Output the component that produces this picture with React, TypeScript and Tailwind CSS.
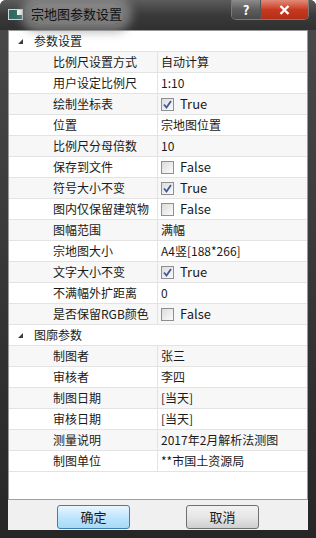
import React from "react"

type Row =
  | { kind: "cat"; label: string }
  | { kind: "text"; label: string; value: string }
  | { kind: "bool"; label: string; value: boolean }

const rows: Row[] = [
  { kind: "cat", label: "参数设置" },
  { kind: "text", label: "比例尺设置方式", value: "自动计算" },
  { kind: "text", label: "用户设定比例尺", value: "1:10" },
  { kind: "bool", label: "绘制坐标表", value: true },
  { kind: "text", label: "位置", value: "宗地图位置" },
  { kind: "text", label: "比例尺分母倍数", value: "10" },
  { kind: "bool", label: "保存到文件", value: false },
  { kind: "bool", label: "符号大小不变", value: true },
  { kind: "bool", label: "图内仅保留建筑物", value: false },
  { kind: "text", label: "图幅范围", value: "满幅" },
  { kind: "text", label: "宗地图大小", value: "A4竖[188*266]" },
  { kind: "bool", label: "文字大小不变", value: true },
  { kind: "text", label: "不满幅外扩距离", value: "0" },
  { kind: "bool", label: "是否保留RGB颜色", value: false },
  { kind: "cat", label: "图廓参数" },
  { kind: "text", label: "制图者", value: "张三" },
  { kind: "text", label: "审核者", value: "李四" },
  { kind: "text", label: "制图日期", value: "[当天]" },
  { kind: "text", label: "审核日期", value: "[当天]" },
  { kind: "text", label: "测量说明", value: "2017年2月解析法测图" },
  { kind: "text", label: "制图单位", value: "**市国土资源局" },
]

const CheckBox = ({ checked }: { checked: boolean }) => (
  <span className="w-[13px] h-[13px] border border-[#8f8f8f] bg-gradient-to-br from-[#dcdcdc] to-[#fbfbfb] flex items-center justify-center shrink-0">
    {checked && (
      <svg width="9" height="9" viewBox="0 0 9 9">
        <path d="M1 4.5 L3.5 7.5 L8 1" fill="none" stroke="#3d5a99" strokeWidth="1.8" />
      </svg>
    )}
  </span>
)

const PropRow = ({ row, index }: { row: Row; index: number }) => {
  const bg = index % 2 === 1 ? "bg-[#f7f7f7]" : "bg-white"
  if (row.kind === "cat") {
    return (
      <div className={`h-[21px] flex items-center border-b border-[#e3e3e3] ${bg}`}>
        <svg width="5" height="5" viewBox="0 0 5 5" className="ml-[9px]">
          <polygon points="5,0 5,5 0,5" fill="#3c3c3c" />
        </svg>
        <span className="ml-[11px]">{row.label}</span>
      </div>
    )
  }
  return (
    <div className={`h-[21px] flex border-b border-[#e3e3e3] ${bg}`}>
      <div className="w-[149px] shrink-0 border-r border-[#e3e3e3] pl-[44px] flex items-center whitespace-nowrap">
        {row.label}
      </div>
      <div className="flex-1 pl-[3px] flex items-center whitespace-nowrap">
        {row.kind === "bool" ? (
          <>
            <CheckBox checked={row.value} />
            <span className="ml-[6px] text-[13px]">{row.value ? "True" : "False"}</span>
          </>
        ) : (
          row.value
        )}
      </div>
    </div>
  )
}

export default function App() {
  return (
    <div className="w-[316px] h-[538px] flex flex-col bg-gradient-to-b from-[#4a4a4a] to-[#262626] rounded-t-[6px] overflow-hidden font-['Segoe_UI','Noto_Sans_CJK_SC',sans-serif] text-[12px] text-[#1a1a1a]">
      {/* Title bar */}
      <div className="h-[30px] shrink-0 flex items-start bg-gradient-to-b from-[#5c5c5c] via-[#3a3a3a] to-[#303030]">
        <div className="flex items-center h-[28px] pl-[8px] gap-[6px]">
          <span className="w-[15px] h-[11px] bg-[#2f6b63] border border-[#cfd8d6] flex items-start justify-end">
            <span className="w-[5px] h-[5px] bg-white" />
          </span>
          <span className="relative text-[13px] text-[#111] px-[2px] rounded-[10px] bg-[#9a9a9a]/70 shadow-[0_0_10px_8px_rgba(150,150,150,0.7)]">
            宗地图参数设置
          </span>
        </div>
        <div className="ml-auto mr-[7px] flex h-[20px] border border-t-0 border-[#7a7a7a] rounded-b-[5px] overflow-hidden">
          <div className="w-[29px] flex items-center justify-center bg-gradient-to-b from-[#8c8c8c] via-[#5e5e5e] to-[#4a4a4a] border-r border-[#555] text-white font-bold text-[13px]">
            ?
          </div>
          <div className="w-[47px] flex items-center justify-center bg-gradient-to-b from-[#e08a78] via-[#c8391f] to-[#b23018]">
            <svg width="11" height="10" viewBox="0 0 11 10">
              <path d="M1.5 1 L9.5 9 M9.5 1 L1.5 9" stroke="white" strokeWidth="2.4" />
            </svg>
          </div>
        </div>
      </div>

      {/* Client area */}
      <div className="flex-1 mx-[8px] flex flex-col bg-[#f0f0f0]">
        <div className="h-[470px] bg-white border border-[#9a9a9a] border-b-[#a0a0a0] flex flex-col">
          {rows.map((r, i) => (
            <PropRow key={i} row={r} index={i} />
          ))}
        </div>
        <div className="flex-1 flex items-start pt-[5px]">
          <button className="ml-[49px] w-[73px] h-[24px] rounded-[3px] border border-[#3c7fb1] bg-gradient-to-b from-[#eaf6fd] via-[#bee6fd] to-[#a7d9f5] text-[13px]">
            确定
          </button>
          <button className="ml-[56px] w-[73px] h-[24px] rounded-[3px] border border-[#707070] bg-gradient-to-b from-[#f2f2f2] via-[#e6e6e6] to-[#cfcfcf] text-[13px]">
            取消
          </button>
        </div>
      </div>
      <div className="h-[8px] shrink-0" />
    </div>
  )
}
